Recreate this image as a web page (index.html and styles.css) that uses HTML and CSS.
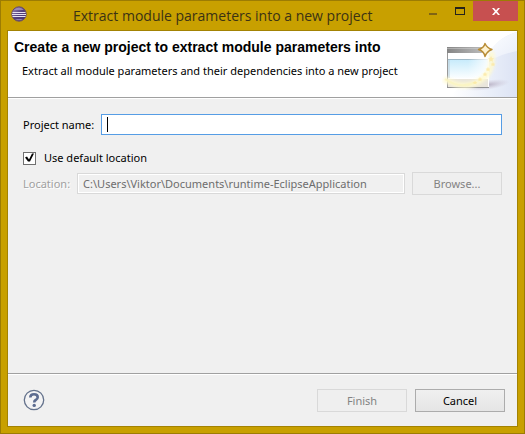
FILE: index.html
```html
<!DOCTYPE html>
<html lang="en">
<head>
<meta charset="utf-8">
<title>Extract module parameters into a new project</title>
<link rel="stylesheet" href="styles.css">
</head>
<body>
<main class="window">
  <header class="titlebar">
    <svg class="app-icon" width="16" height="16" viewBox="0 0 16 16" aria-hidden="true">
      <defs>
        <linearGradient id="orb" x1="0" y1="0" x2="1" y2="1">
          <stop offset="0" stop-color="#a493c0"/>
          <stop offset=".5" stop-color="#54407c"/>
          <stop offset="1" stop-color="#47316c"/>
        </linearGradient>
      </defs>
      <circle cx="8" cy="8" r="7.2" fill="url(#orb)" stroke="#6a4c68"/>
      <path d="M3 4Q8-.5 13 4Z" fill="#a99bc5" opacity=".7"/>
      <path d="M1.5 6.5h13M1 8.5h14M1.5 10.5h13" stroke="#e5dff0"/>
      <path d="M4 13Q8 15.5 12 13Z" fill="#8d7cae"/>
    </svg>
    <h1 class="title">Extract module parameters into a new project</h1>
    <div class="controls">
      <button class="control" type="button" aria-label="Minimize">
        <svg width="10" height="8" viewBox="0 0 10 8"><path d="M1 6h8v2H1z" fill="#806414"/></svg>
      </button>
      <button class="control" type="button" aria-label="Maximize">
        <svg width="10" height="8" viewBox="0 0 10 8"><path d="M0 0h10v8H0zM1 2v5h8V2z" fill="#26231c" fill-rule="evenodd"/></svg>
      </button>
      <button class="control close" type="button" aria-label="Close">
        <svg width="8" height="7" viewBox="0 0 8 7"><path d="M0 0h2l2 2.3L6 0h2L5.1 3.5 8 7H6L4 4.7 2 7H0l2.900-3.500z" fill="#fff"/></svg>
      </button>
    </div>
  </header>
  <div class="client">
    <section class="banner">
      <div class="banner-text">
        <h2 class="heading">Create a new project to extract module parameters into</h2>
        <p class="description">Extract all module parameters and their dependencies into a new project</p>
      </div>
      <svg class="banner-art" width="75" height="66" viewBox="0 0 75 66" aria-hidden="true">
        <defs>
          <linearGradient id="sweep" gradientUnits="userSpaceOnUse" x1="10" y1="0" x2="75" y2="0">
            <stop offset="0" stop-color="#fff"/>
            <stop offset=".6" stop-color="#e9eef9"/>
            <stop offset="1" stop-color="#dce3f4"/>
          </linearGradient>
          <linearGradient id="light" x1="0" y1="0" x2="1" y2="1">
            <stop offset="0" stop-color="#fcfdff"/>
            <stop offset="1" stop-color="#e9eef9"/>
          </linearGradient>
          <linearGradient id="bar" x1="0" y1="0" x2="1" y2="0">
            <stop offset="0" stop-color="#858585"/>
            <stop offset="1" stop-color="#c4c4c4"/>
          </linearGradient>
          <linearGradient id="pane" x1="0" y1="0" x2="0" y2="1">
            <stop offset="0" stop-color="#c5eafb"/>
            <stop offset="1" stop-color="#fbfeff"/>
          </linearGradient>
          <linearGradient id="fade" x1="0" y1="0" x2="1" y2="0">
            <stop offset="0" stop-color="#fff" stop-opacity="0"/>
            <stop offset="1" stop-color="#fff" stop-opacity=".85"/>
          </linearGradient>
          <linearGradient id="edge" x1="0" y1="0" x2="0" y2="1">
            <stop offset="0" stop-color="#e2e2e2"/>
            <stop offset="1" stop-color="#8e8e90"/>
          </linearGradient>
          <radialGradient id="shade">
            <stop offset="0" stop-color="#aaa1b6" stop-opacity=".8"/>
            <stop offset="1" stop-color="#c8bdcf" stop-opacity="0"/>
          </radialGradient>
          <filter id="soft" x="-20%" y="-20%" width="140%" height="140%"><feGaussianBlur stdDeviation="1.4"/></filter>
        </defs>
        <path d="M75 1C61 5 52 13 46 24L8 66h67z" fill="url(#sweep)"/>
        <path d="M75 1C61 5 52 13 47 22L53 27Q64 22 75 20z" fill="url(#light)"/>
        <ellipse cx="45" cy="54" rx="23" ry="5" fill="url(#shade)" transform="rotate(-8 45 54)"/>
        <path d="M5 16h42v41H5z" fill="#fff"/>
        <path d="M5 16h42v6H5z" fill="url(#bar)"/>
        <path d="M5 17.500h42" stroke="#d2d2d2" opacity=".5"/>
        <path d="M6 28h40v19H6z" fill="url(#pane)"/>
        <path d="M6 28.500h40" stroke="#9fb9c7"/>
        <path d="M26 28h20v19H26z" fill="url(#fade)"/>
        <path d="M7 29v18" stroke="#b8cbd6"/>
        <path d="M6 48h40v8H6z" fill="#e9e5dc"/>
        <path d="M5.500 22v34" stroke="#999"/>
        <path d="M46.500 22v34" stroke="url(#edge)"/>
        <path d="M5 56.500h42" stroke="#929292"/>
        <path d="M2 48Q23 60 39 49Q53 39 49 21" fill="none" stroke="#fffad0" stroke-width="6" opacity=".85" filter="url(#soft)"/>
        <path d="M3 48Q19 59 34 51" fill="none" stroke="#faf4c0" stroke-width="2" opacity=".8"/>
        <path d="M49 25l1 2 2 .4-1.500 1.400.3 2-1.800-1-1.800 1 .3-2-1.500-1.400 2-.4zM51 31l.8 1.500 1.500.3-1 1 .2 1.500-1.500-.8-1.500.8.2-1.500-1-1 1.500-.3zM46 36l.8 1.500 1.500.3-1 1 .2 1.500-1.500-.8-1.500.8.2-1.500-1-1 1.500-.3zM43 41l.8 1.500 1.500.3-1 1 .2 1.500-1.500-.8-1.500.8.2-1.500-1-1 1.500-.3zM38 46l.8 1.500 1.500.3-1 1 .2 1.500-1.500-.8-1.500.8.2-1.500-1-1 1.500-.3zM33 50l.8 1 1.500.3-1 1 .2 1-1.500-.5-1.500.5.2-1-1-1 1.500-.3z" fill="#fbe7a2" opacity=".8"/>
        <path d="M43 12.500Q42 17 36.500 18.500Q42 20 43 25.500Q45 20 50 18.500Q45 17 43 12.500z" fill="#fff3d1" stroke="#b98d36" stroke-width="1.400" stroke-linejoin="round"/>
      </svg>
    </section>
    <form class="form">
      <div class="row">
        <label for="project">Project name:</label>
        <div class="entry">
          <input class="text-field active" id="project" type="text">
          <span class="caret"></span>
        </div>
      </div>
      <div class="row check-row">
        <input class="checkbox" id="default-location" type="checkbox" checked>
        <label for="default-location">Use default location</label>
      </div>
      <div class="row location-row">
        <label class="disabled" for="location">Location:</label>
        <input class="text-field" id="location" type="text" value="C:\Users\Viktor\Documents\runtime-EclipseApplication" disabled>
        <button class="button" type="button" disabled>Browse...</button>
      </div>
    </form>
    <footer class="footer">
      <button class="help" type="button" aria-label="Help">
        <svg width="22" height="22" viewBox="0 0 22 22">
          <circle cx="11" cy="11" r="9.700" fill="#f3f3f4" stroke="#64728c" stroke-width="1.300"/>
          <path d="M7.300 8.400Q7.300 5.300 11 5.300Q14.700 5.300 14.700 8.200Q14.700 9.900 12.700 11Q11.200 11.800 11.200 13.600" fill="none" stroke="#5d6c90" stroke-width="2.600"/>
          <circle cx="11.200" cy="16.400" r="1.700" fill="#5d6c90"/>
        </svg>
      </button>
      <button class="button" type="button" disabled>Finish</button>
      <button class="button" type="button">Cancel</button>
    </footer>
  </div>
</main>
</body>
</html>
```
FILE: styles.css
```css
* {
  box-sizing: border-box;
}

body {
  margin: 0;
  font: 11px/16px "Noto Sans", "Open Sans", sans-serif;
  color: #000;
}

h1, h2, p {
  margin: 0;
}

button, input {
  margin: 0;
  font: inherit;
  color: inherit;
}

.window {
  display: flex;
  flex-direction: column;
  min-height: 100vh;
  padding: 0 6px 6px;
  border: 1px solid #9c7c03;
  background: #c8a000;
}

.titlebar {
  display: flex;
  height: 29px;
  padding-left: 4px;
}

.app-icon {
  flex: none;
  margin-top: 5px;
}

.title {
  flex: 1;
  padding-left: 46px;
  font: 14px/29px "Open Sans", sans-serif;
  white-space: nowrap;
  color: #3b3214;
}

.controls {
  display: flex;
}

.control {
  display: flex;
  justify-content: center;
  width: 27px;
  height: 20px;
  padding: 6px 0 0;
  border: 0;
  background: none;
}

.close {
  width: 45px;
  padding-top: 7px;
  background: #c75050;
}

.client {
  display: flex;
  flex: 1;
  flex-direction: column;
  border: 1px solid #a38303;
  background: #f0f0f0;
}

.banner {
  display: flex;
  justify-content: space-between;
  border-bottom: 1px solid #a0a0a0;
  box-shadow: 0 1px #fff;
  background: #fff;
}

.banner-text {
  padding: 8px 0 0 6px;
  white-space: nowrap;
}

.heading {
  font: bold 14px/16px "Liberation Sans", Arial, sans-serif;
}

.description {
  padding: 8px 0 0 8px;
}

.banner-art {
  flex: none;
}

.form {
  flex: 1;
  padding: 16px 15px;
}

.row {
  display: flex;
  align-items: center;
}

.row label {
  flex: none;
}

.entry {
  position: relative;
  display: flex;
  flex: 1;
  margin-left: 7px;
}

.text-field {
  flex: 1;
  width: 100%;
  min-width: 0;
  height: 21px;
  padding: 0 5px;
  border: 1px solid #d9d9d9;
  background: #f0f0f0;
  outline: 0;
}

.text-field.active {
  border-color: #569de5;
  background: #fff;
  caret-color: transparent;
}

.text-field:disabled {
  box-shadow: inset 0 0 0 1px #fff;
  color: #6d6d6d;
}

.caret {
  position: absolute;
  top: 3px;
  left: 6px;
  width: 1px;
  height: 15px;
  background: #000;
}

.check-row {
  gap: 8px;
  padding: 15px 0 6px;
}

.checkbox {
  width: 13px;
  height: 13px;
  border: 1px solid #707070;
  appearance: none;
  background: #fff;
}

.checkbox:checked::before {
  display: block;
  width: 11px;
  height: 11px;
  background: #000;
  clip-path: polygon(1px 5px, 3px 4px, 5px 7px, 8px 1px, 10px 1px, 6px 9px, 4px 9px);
  content: "";
}

.location-row {
  gap: 7px;
}

.disabled {
  color: #a0a0a0;
  text-shadow: 1px 1px #fff;
}

.button {
  width: 90px;
  height: 23px;
  padding: 0;
  border: 1px solid #acacac;
  background: linear-gradient(#f0f0f0, #e5e5e5);
}

.button:disabled {
  border-color: #d9d9d9;
  background: #efefef;
  color: #838383;
}

.footer {
  display: flex;
  gap: 8px;
  padding: 15px 12px 14px 15px;
  border-top: 1px solid #a0a0a0;
  box-shadow: inset 0 1px #fff;
}

.help {
  display: flex;
  height: 22px;
  margin-right: auto;
  padding: 0;
  border: 0;
  background: none;
}
```
